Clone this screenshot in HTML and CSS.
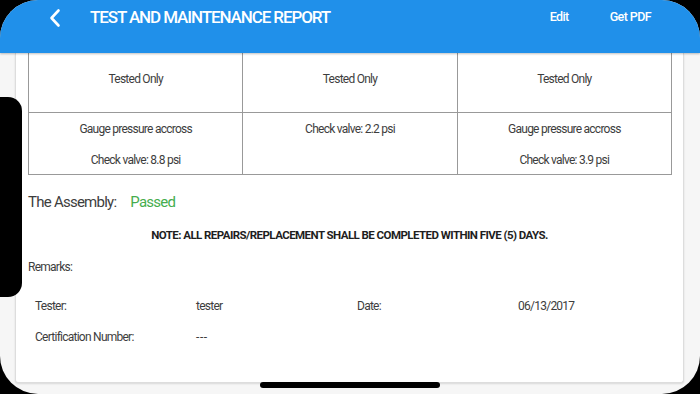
FILE: index.html
```html
<!DOCTYPE html>
<html lang="en">
<head>
  <meta charset="UTF-8">
  <title>Test and Maintenance Report</title>
  <link rel="stylesheet" href="styles.css">
</head>
<body>

<div class="screen">
  <header class="topbar">
    <button class="back" aria-label="Back">
      <svg width="12" height="20" viewBox="0 0 12 20">
        <path d="M9.5 2.5 L2.5 10 L9.5 17.5" fill="none" stroke="#fff" stroke-width="2.6" stroke-linecap="round" stroke-linejoin="round"/>
      </svg>
    </button>
    <h1>TEST AND MAINTENANCE REPORT</h1>
    <nav class="actions">
      <a class="edit">Edit</a>
      <a class="pdf">Get PDF</a>
    </nav>
  </header>

  <main class="page">
    <section class="card">
      <table class="results">
        <tr class="first">
          <td>Tested Only</td>
          <td>Tested Only</td>
          <td>Tested Only</td>
        </tr>
        <tr>
          <td><p>Gauge pressure accross</p><p>Check valve: 8.8 psi</p></td>
          <td><p>Check valve: 2.2 psi</p></td>
          <td><p>Gauge pressure accross</p><p>Check valve: 3.9 psi</p></td>
        </tr>
      </table>

      <div class="assembly">
        <span>The Assembly:</span>
        <span class="passed">Passed</span>
      </div>

      <p class="note">NOTE: ALL REPAIRS/REPLACEMENT SHALL BE COMPLETED WITHIN FIVE (5) DAYS.</p>

      <p class="remarks">Remarks:</p>

      <div class="signoff">
        <span>Tester:</span>
        <span>tester</span>
        <span>Date:</span>
        <span>06/13/2017</span>
        <span>Certification Number:</span>
        <span class="empty">---</span>
      </div>
    </section>
  </main>

  <div class="notch"></div>
  <div class="home-bar"></div>
</div>

</body>
</html>
```

FILE: styles.css
```css
html, body {
  margin: 0;
  height: 100%;
  background: #000;
}
body {
  font-family: Roboto, "Liberation Sans", Arial, sans-serif;
  color: #3d3d3d;
  letter-spacing: -0.75px;
}
.screen {
  position: relative;
  width: 700px;
  height: 394px;
  overflow: hidden;
  border-radius: 38px;
  background: #f6f6f6;
}
.topbar {
  position: relative;
  z-index: 2;
  height: 53px;
  display: flex;
  align-items: flex-start;
  background: #2090ea;
  color: #fff;
  box-shadow: 0 1px 2px rgba(0, 0, 0, 0.25);
}
.back {
  margin: 8px 0 0 49px;
  padding: 0;
  border: 0;
  background: none;
  height: 20px;
}
.topbar h1 {
  margin: 7px 0 0 29px;
  font-size: 17px;
  line-height: 20px;
  font-weight: 500;
  letter-spacing: -1.1px;
}
.actions {
  margin: 9px 0 0 auto;
  padding-right: 49px;
  display: flex;
  gap: 41px;
  font-size: 12.5px;
  line-height: 16px;
  font-weight: 500;
  letter-spacing: -0.6px;
}
.card {
  margin: 0 16px 0 15px;
  padding: 0 12px 37px;
  background: #fff;
  border: 1px solid #ddd;
  border-top: 0;
  border-radius: 0 0 3px 3px;
  box-shadow: 0 1px 2px rgba(0, 0, 0, 0.12);
}
.results {
  width: 644px;
  border-collapse: collapse;
  table-layout: fixed;
  font-size: 12px;
  line-height: 16px;
}
.results td {
  border: 1px solid #999;
  text-align: center;
  vertical-align: top;
  padding: 8px 4px 6px;
}
.results .first td {
  border-top: 0;
  padding: 18px 4px 25px;
}
.results p {
  margin: 0;
}
.results p + p {
  margin-top: 15px;
}
.assembly {
  margin-top: 17px;
  font-size: 15px;
  line-height: 20px;
  display: flex;
  gap: 14px;
}
.passed {
  color: #45ad4e;
}
.note {
  margin: 15px 0 0;
  text-align: center;
  font-size: 11.5px;
  line-height: 16px;
  font-weight: bold;
  color: #1e1e1e;
  letter-spacing: -0.55px;
}
.remarks {
  margin: 16px 0 0;
  font-size: 12px;
  line-height: 16px;
}
.signoff {
  margin-top: 23px;
  padding: 0 7px;
  display: grid;
  grid-template-columns: repeat(4, 161px);
  row-gap: 15px;
  font-size: 12px;
  line-height: 16px;
}
.signoff .empty {
  letter-spacing: 0.6px;
}
.notch {
  position: absolute;
  left: 0;
  top: 97px;
  width: 22px;
  height: 200px;
  background: #000;
  border-radius: 0 14px 14px 0;
}
.home-bar {
  position: absolute;
  left: 260px;
  bottom: 6px;
  width: 180px;
  height: 6px;
  background: #000;
  border-radius: 3px;
}
```
